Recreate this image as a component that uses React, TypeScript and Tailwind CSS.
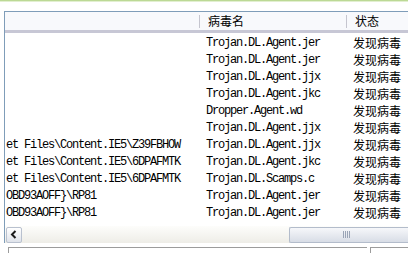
const rows: { path: string; name: string; state: string }[] = [
    { path: '', name: 'Trojan.DL.Agent.jer', state: '发现病毒' },
    { path: '', name: 'Trojan.DL.Agent.jer', state: '发现病毒' },
    { path: '', name: 'Trojan.DL.Agent.jjx', state: '发现病毒' },
    { path: '', name: 'Trojan.DL.Agent.jkc', state: '发现病毒' },
    { path: '', name: 'Dropper.Agent.wd', state: '发现病毒' },
    { path: '', name: 'Trojan.DL.Agent.jjx', state: '发现病毒' },
    { path: 'et Files\\Content.IE5\\Z39FBHOW', name: 'Trojan.DL.Agent.jjx', state: '发现病毒' },
    { path: 'et Files\\Content.IE5\\6DPAFMTK', name: 'Trojan.DL.Agent.jkc', state: '发现病毒' },
    { path: 'et Files\\Content.IE5\\6DPAFMTK', name: 'Trojan.DL.Scamps.c', state: '发现病毒' },
    { path: 'OBD93AOFF}\\RP81', name: 'Trojan.DL.Agent.jer', state: '发现病毒' },
    { path: 'OBD93AOFF}\\RP81', name: 'Trojan.DL.Agent.jer', state: '发现病毒' },
];

const mono = "font-['Liberation_Mono','Noto_Sans_CJK_SC',monospace] text-[12px] tracking-[-1.2px]";
const cjk = "font-['Noto_Sans_CJK_SC','Noto_Sans',sans-serif] text-[12px]";

export default function App() {
    return (
        <div className="w-[408px] h-[253px] bg-white overflow-hidden flex flex-col">
            {/* green strip of the window above */}
            <div className="h-[2px] bg-[#bcd995]" />
            <div className="h-[1px] bg-[#e2efd0]" />

            <div className="mt-[10px] ml-[4px] border-l border-t border-[#7f9db9] flex flex-col">
                {/* Column header */}
                <div className="h-[21px] flex bg-[#f8f9fc] border-b-[3px] border-[#c7c7d5] text-black">
                    <div className="w-[195px] flex items-center justify-end">
                        <div className="w-px h-[13px] bg-[#c5c5cf] mr-[0px]" />
                    </div>
                    <div className={`w-[147px] flex items-center pl-[8px] ${cjk}`}>
                        <span className="flex-1">病毒名</span>
                        <div className="w-px h-[13px] bg-[#c5c5cf]" />
                    </div>
                    <div className={`flex-1 flex items-center pl-[8px] ${cjk}`}>状态</div>
                </div>

                {/* Rows */}
                <div className="h-[193px] overflow-hidden pt-[1px]">
                    {rows.map((r, i) => (
                        <div key={i} className="h-[17px] flex items-center text-black whitespace-nowrap">
                            <div className={`w-[196px] pl-[1px] overflow-hidden ${mono}`}>{r.path}</div>
                            <div className={`w-[148px] pl-[5px] ${mono}`}>{r.name}</div>
                            <div className={`flex-1 pl-[4px] ${cjk}`}>{r.state}</div>
                        </div>
                    ))}
                </div>

                {/* Horizontal scrollbar */}
                <div className="h-[17px] flex items-center bg-gradient-to-b from-[#fdfdfb] to-[#eeede7]">
                    <div className="ml-[1px] w-[16px] h-[16px] rounded-[2px] border border-[#b9c1cf] bg-gradient-to-b from-[#ffffff] to-[#dfe3ea] flex items-center justify-center">
                        <svg width="8" height="9" viewBox="0 0 8 9">
                            <path d="M5.5 1 L2 4.5 L5.5 8" stroke="#1b1b1b" strokeWidth="2" fill="none" />
                        </svg>
                    </div>
                    <div className="w-[267px]" />
                    <div className="flex-1 h-[16px] rounded-l-[2px] border border-r-0 border-[#b3bccb] bg-gradient-to-b from-[#f6f7fa] to-[#d8dde6] flex items-center pl-[53px]">
                        <div className="flex gap-[1px]">
                            <div className="w-px h-[7px] bg-[#9aa4b6]" />
                            <div className="w-px h-[7px] bg-[#9aa4b6]" />
                            <div className="w-px h-[7px] bg-[#9aa4b6]" />
                            <div className="w-px h-[7px] bg-[#9aa4b6]" />
                        </div>
                    </div>
                </div>
            </div>

            {/* top edges of the panels below */}
            <div className="mt-[4px] flex">
                <div className="ml-[8px] w-[359px] h-[6px] border-l border-t border-[#9c9c9c]" />
                <div className="ml-[3px] flex-1 h-[6px] border-l border-t border-[#9c9c9c]" />
            </div>
        </div>
    );
}
